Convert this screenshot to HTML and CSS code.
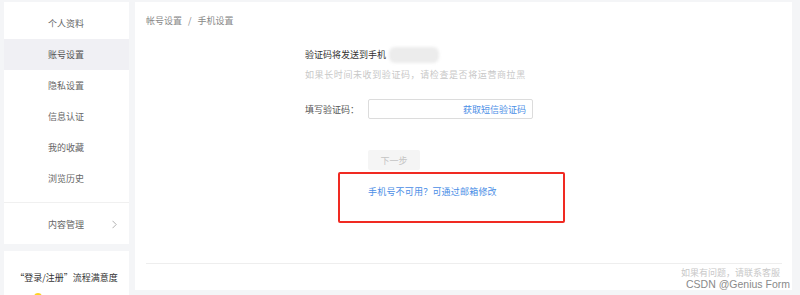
FILE: index.html
```html
<!DOCTYPE html>
<html lang="zh-CN">
  <head>
    <meta charset="utf-8" />
    <title>账号设置 - 手机设置</title>
    <link rel="stylesheet" href="styles.css">
  </head>
  <body>
    <div class="page">
      <div class="side">
        <div class="menu">
          <div class="menu-item">个人资料</div>
          <div class="menu-item active">账号设置</div>
          <div class="menu-item">隐私设置</div>
          <div class="menu-item">信息认证</div>
          <div class="menu-item">我的收藏</div>
          <div class="menu-item">浏览历史</div>
          <div class="menu-divider"></div>
          <div class="menu-item more">内容管理
            <svg class="chevron" width="5" height="9" viewBox="0 0 5 9"><path d="M0.5 0.8 L4.2 4.5 L0.5 8.2" fill="none" stroke="#a8a8a8" stroke-width="0.9"/></svg>
          </div>
        </div>
        <div class="survey">
          <div class="survey-title">“登录/注册”流程满意度</div>
          <div class="survey-dot"></div>
        </div>
      </div>

      <div class="main">
        <div class="crumb">帐号设置<span class="sep">/</span>手机设置</div>

        <div class="verify">
          <div class="send-tip">验证码将发送到手机<span class="phone"></span></div>
          <div class="hint">如果长时间未收到验证码，请检查是否将运营商拉黑</div>

          <div class="code-row">
            <span class="label">填写验证码：</span>
            <div class="code-input">
              <a class="get-code">获取短信验证码</a>
            </div>
          </div>

          <div class="next-row">
            <button class="next-btn">下一步</button>
          </div>

          <div class="mark-box">
            <a class="email-link">手机号不可用？可通过邮箱修改</a>
          </div>
        </div>

        <div class="footer">
          <div class="help">如果有问题，请联系客服</div>
        </div>
      </div>
    </div>
    <div class="watermark">CSDN @Genius Form</div>
  </body>
</html>
```

FILE: styles.css
```css
body{
  margin: 0;
  background: #f4f5f7;
  font-family: "Noto Sans CJK SC", "Noto Sans", sans-serif;
  font-size: 9px;
  color: #333;
  height: 295px;
  overflow: hidden;
}
.page{
  display: flex;
  height: 295px;
  box-sizing: border-box;
  padding: 2px 8px 0 4px;
  gap: 6px;
}
.side{
  width: 125px;
  flex-shrink: 0;
  display: flex;
  flex-direction: column;
  gap: 7px;
}
.menu{
  background: #fff;
  padding: 6px 0 4px;
}
.menu-item{
  height: 31px;
  line-height: 31px;
  padding-left: 44px;
  color: #666;
}
.menu-item.active{
  background: #f0f0f4;
  color: #555;
}
.menu-divider{
  height: 1px;
  background: #f0f0f0;
  margin: 8px 0 6px;
}
.menu-item.more{
  display: flex;
  align-items: center;
  justify-content: space-between;
  padding-right: 12px;
}
.survey{
  flex: 1;
  background: #fff;
  padding-top: 18px;
  overflow: hidden;
}
.survey-title{
  text-align: center;
  color: #333;
  line-height: 18px;
}
.survey-dot{
  width: 8px;
  height: 8px;
  border-radius: 50%;
  background: #ffd21f;
  margin: 6px 0 0 30px;
}
.main{
  flex: 1;
  background: #fff;
  height: 288px;
  padding: 0 10px 0 11px;
  display: flex;
  flex-direction: column;
}
.crumb{
  color: #888;
  padding-top: 10px;
  line-height: 18px;
}
.crumb .sep{
  margin: 0 6px;
}
.verify{
  margin-left: 159px;
  padding-top: 16px;
}
.send-tip{
  display: flex;
  align-items: center;
  line-height: 18px;
  color: #333;
}
.phone{
  display: inline-block;
  width: 50px;
  height: 16px;
  margin-left: 3px;
  background: #ececec;
  border-radius: 6px;
  filter: blur(1.5px);
}
.hint{
  color: #c8c8c8;
  line-height: 18px;
  margin-top: 2px;
  letter-spacing: 0.6px;
}
.code-row{
  display: flex;
  align-items: center;
  margin-top: 15px;
}
.label{
  width: 63px;
  color: #555;
}
.code-input{
  width: 157px;
  height: 18px;
  border: 1px solid #dcdcdc;
  border-radius: 2px;
  display: flex;
  align-items: center;
  justify-content: flex-end;
  padding-right: 6px;
}
.get-code{
  color: #4a8ee6;
}
.next-row{
  margin-top: 31px;
  padding-left: 63px;
}
.next-btn{
  width: 52px;
  height: 20px;
  border: none;
  border-radius: 2px;
  background: #f5f5f5;
  color: #c4c4c4;
  font-family: inherit;
  font-size: 9px;
  padding: 0;
  display: block;
}
.mark-box{
  margin: 2px 0 0 33px;
  width: 195px;
  height: 47px;
  border: 2px solid #f02a22;
  border-radius: 2px;
  padding-left: 28px;
  line-height: 36px;
}
.email-link{
  color: #4a8ee6;
  letter-spacing: 0.2px;
}
.footer{
  margin-top: auto;
  margin-bottom: 12px;
  border-top: 1px solid #eee;
  padding-top: 3px;
}
.help{
  text-align: right;
  color: #c8c8c8;
  line-height: 11px;
  padding-right: 2px;
}
.watermark{
  position: absolute;
  right: 10px;
  top: 279px;
  line-height: 11px;
  font-family: "Liberation Sans", Arial, sans-serif;
  font-size: 10.5px;
  color: #8a8a8a;
}
```
